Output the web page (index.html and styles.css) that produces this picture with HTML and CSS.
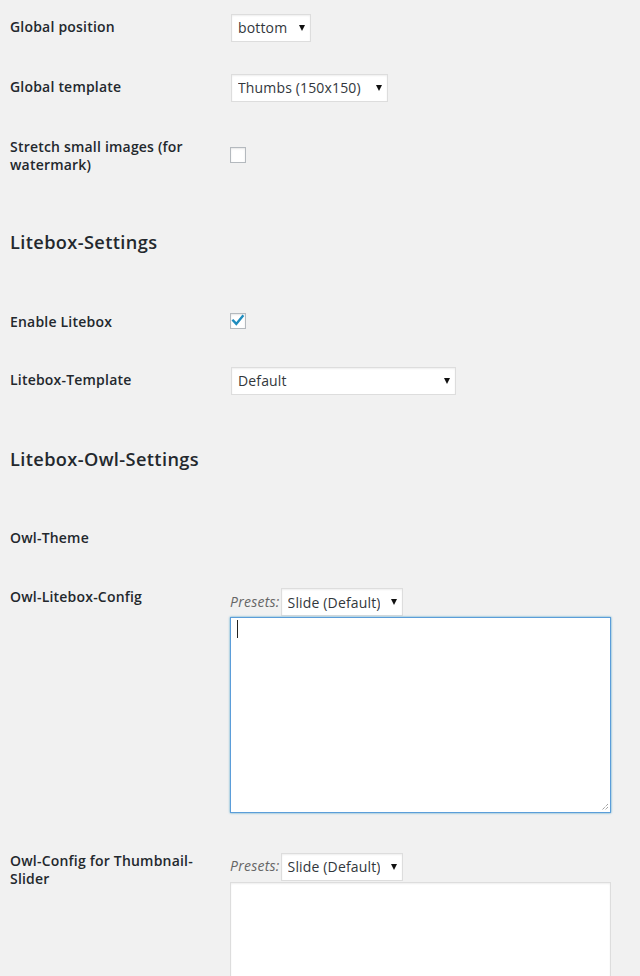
FILE: index.html
```html
<!DOCTYPE html>
<html>
<head>
<meta charset="utf-8">
<link rel="stylesheet" href="styles.css">
</head>
<body>
<div class="wrap">
  <div class="form">
    <div class="row">
      <div class="label">Global position</div>
      <div class="field">
        <span class="select w-bottom"><select><option>bottom</option></select></span>
      </div>
    </div>
    <div class="row">
      <div class="label">Global template</div>
      <div class="field">
        <span class="select w-thumbs"><select><option>Thumbs (150x150)</option></select></span>
      </div>
    </div>
    <div class="row">
      <div class="label">Stretch small images (for watermark)</div>
      <div class="field">
        <span class="checkbox"></span>
      </div>
    </div>
  </div>

  <h2 class="section-title">Litebox-Settings</h2>

  <div class="form">
    <div class="row">
      <div class="label">Enable Litebox</div>
      <div class="field">
        <span class="checkbox">
          <svg class="check" width="16" height="16" viewBox="0 0 16 16"><path d="M3.2 7.6 L6.3 10.9 L12.6 3.2" fill="none" stroke="#1e8cbe" stroke-width="2.4" stroke-linecap="square" stroke-linejoin="miter"/></svg>
        </span>
      </div>
    </div>
    <div class="row">
      <div class="label">Litebox-Template</div>
      <div class="field">
        <span class="select w-default"><select><option>Default</option></select></span>
      </div>
    </div>
  </div>

  <h2 class="section-title">Litebox-Owl-Settings</h2>

  <div class="form">
    <div class="row">
      <div class="label">Owl-Theme</div>
      <div class="field"></div>
    </div>
    <div class="row">
      <div class="label">Owl-Litebox-Config</div>
      <div class="field field-stack">
        <div class="presets">
          <span class="presets-label">Presets:</span>
          <span class="select w-slide"><select><option>Slide (Default)</option></select></span>
        </div>
        <div class="textarea is-focused">
          <span class="caret"></span>
          <svg class="resize" width="9" height="9" viewBox="0 0 9 9"><path d="M8 2 L2 8 M8 5 L5 8" stroke="#777" stroke-width="1" stroke-dasharray="1 1" fill="none"/></svg>
        </div>
      </div>
    </div>
    <div class="row">
      <div class="label">Owl-Config for Thumbnail-Slider</div>
      <div class="field field-stack">
        <div class="presets">
          <span class="presets-label">Presets:</span>
          <span class="select w-slide"><select><option>Slide (Default)</option></select></span>
        </div>
        <div class="textarea"></div>
      </div>
    </div>
  </div>
</div>
</body>
</html>
```

FILE: styles.css
```css
html, body {
  margin: 0;
  padding: 0;
}
body {
  background: #f1f1f1;
  color: #444;
  font-family: "Open Sans", "Noto Sans", sans-serif;
  font-size: 13px;
  line-height: 1.4em;
  overflow: hidden;
}
.wrap {
  padding-left: 10px;
  margin-top: -2.2px;
  display: flex;
  flex-direction: column;
}
.form {
  display: flex;
  flex-direction: column;
}
.row {
  display: grid;
  grid-template-columns: 210px 1fr;
}
.label {
  padding: 20px 10px 20px 0;
  width: 200px;
  font-size: 14px;
  line-height: 1.3;
  font-weight: 600;
  letter-spacing: 0.2px;
  color: #23282d;
  align-self: start;
}
.field {
  padding: 15px 10px;
  display: flex;
  align-items: center;
  font-size: 14px;
  line-height: 1.3;
}
.field-stack {
  flex-direction: column;
  align-items: flex-start;
  align-self: start;
}
.section-title {
  margin: 39px 0 41.3px;
  font-size: 18.2px;
  line-height: 18.2px;
  font-weight: 600;
  letter-spacing: 0.38px;
  color: #23282d;
}
.select {
  position: relative;
  display: inline-flex;
  box-sizing: border-box;
  height: 28px;
  margin: 1px;
  border: 1px solid #ddd;
  background: #fff;
  box-shadow: inset 0 1px 2px rgba(0,0,0,.07);
}
.select select {
  appearance: none;
  -webkit-appearance: none;
  border: 0;
  outline: 0;
  background: transparent;
  width: 100%;
  height: 100%;
  padding: 0 22px 0 6px;
  margin: 0;
  font-family: "Open Sans", "Noto Sans", sans-serif;
  font-size: 14px;
  letter-spacing: 0.15px;
  color: #32373c;
}
.select::after {
  content: "";
  position: absolute;
  right: 5px;
  top: 10px;
  border-left: 3.5px solid transparent;
  border-right: 3.5px solid transparent;
  border-top: 6px solid #111;
  pointer-events: none;
}
.w-bottom { width: 80px; }
.w-thumbs { width: 157px; }
.w-default { width: 225px; }
.w-slide { width: 122px; }
.checkbox {
  display: inline-block;
  box-sizing: border-box;
  width: 16px;
  height: 16px;
  margin-top: -2px;
  border: 1px solid #b4b9be;
  background: #fff;
  box-shadow: inset 0 1px 2px rgba(0,0,0,.1);
  position: relative;
}
.check {
  position: absolute;
  left: -1px;
  top: -1px;
}
.presets {
  display: flex;
  align-items: center;
  padding-top: 4.5px;
}
.presets-label {
  font-style: italic;
  color: #666;
  font-size: 14px;
  letter-spacing: 0.25px;
}
.textarea {
  position: relative;
  box-sizing: border-box;
  width: 381px;
  height: 196px;
  margin-bottom: 4px;
  border: 1px solid #ddd;
  background: #fff;
  box-shadow: inset 0 1px 2px rgba(0,0,0,.07);
  padding: 2px 6px;
}
.textarea.is-focused {
  border-color: #5b9dd9;
  box-shadow: 0 0 2px rgba(30,140,190,.8);
}
.caret {
  display: block;
  width: 1px;
  height: 18px;
  background: #222;
}
.resize {
  position: absolute;
  right: 1px;
  bottom: 1px;
}
```
